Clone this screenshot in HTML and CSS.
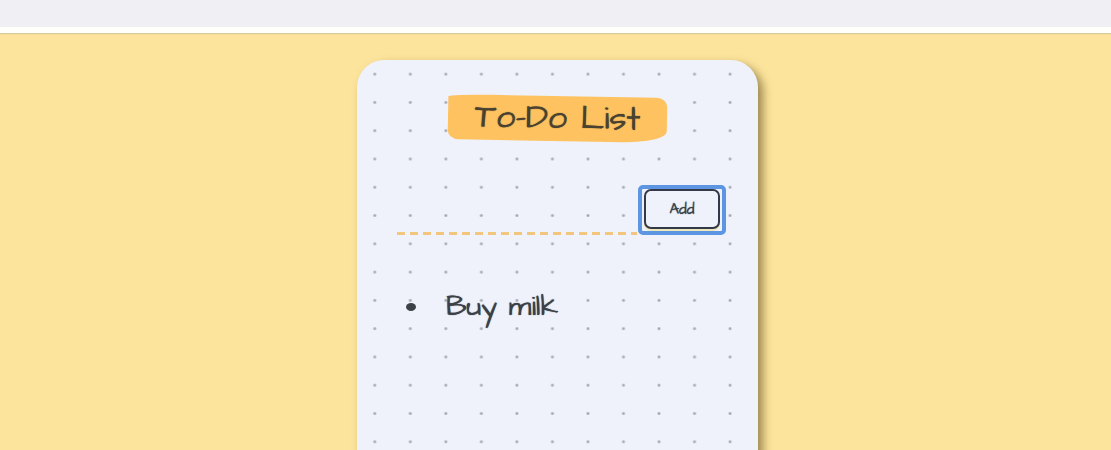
FILE: index.html
```html
<!DOCTYPE html>
<html lang="en">
<head>
<meta charset="utf-8">
<title>To-Do List</title>
<link rel="stylesheet" href="styles.css">
</head>
<body>
<div class="topbar"></div>
<main class="page">
  <section class="card">
    <div class="content">
      <h1 class="title">To-Do List</h1>
      <form class="entry">
        <input class="entry-text" type="text" aria-label="New item">
        <span class="focus-ring"><button class="entry-add" type="button">Add</button></span>
      </form>
      <ul class="items">
        <li class="item">Buy milk</li>
      </ul>
    </div>
  </section>
</main>
</body>
</html>
```

FILE: styles.css
```css
* {
  box-sizing: border-box;
}

body {
  margin: 0;
  height: 100vh;
  overflow: hidden;
  background: #fde49c;
  color: #3c4047;
  font-family: "Architects Daughter", "DejaVu Sans", sans-serif;
}

.topbar {
  height: 33px;
  background: #efeff4;
  border-bottom: 6px solid #fffffb;
  box-shadow: 0 1px 1px #d8c99a;
}

.page {
  display: flex;
  justify-content: center;
  padding: 27px 16px 27px 20px;
}

.card {
  width: 100%;
  max-width: 401px;
  min-height: 481px;
  padding-right: 10px;
  border-radius: 27px 27px 0 0;
  background-color: #eff2fb;
  background-image: radial-gradient(ellipse 2px 2px at center, #a3a7b2 40%, transparent);
  background-origin: content-box;
  background-size: 36px 28px;
  background-repeat: round;
  box-shadow: 5px 5px 10px rgba(90, 75, 30, 0.6);
}

.content {
  padding: 36px 22px 0 40px;
  display: flex;
  flex-direction: column;
}

.title {
  align-self: center;
  margin: 0 0 0 -8px;
  padding: 0 27px;
  border-radius: 20% 5% 20% 5% / 5% 20% 25% 20%;
  background: #fec260;
  color: #4a4230;
  font-size: 34px;
  font-weight: 400;
  line-height: 45px;
  white-space: nowrap;
  text-shadow: 0 0 1px #4a4230;
  transform: rotate(1deg);
}

.entry {
  display: flex;
  align-items: flex-end;
  gap: 1px;
  margin-top: 44px;
}

.entry-text {
  flex: 1;
  min-width: 0;
  height: 46px;
  padding: 0 8px;
  border: 0;
  outline: 0;
  background: repeating-linear-gradient(90deg, #f2c67c 0 8px, transparent 8px 13px) left bottom / 100% 3px no-repeat;
  color: inherit;
  font: inherit;
}

.focus-ring {
  display: flex;
  padding: 0 2px 2px;
  border: 4px solid #5c96e2;
  border-radius: 5px;
}

.entry-add {
  width: 76px;
  height: 40px;
  padding: 0;
  border: 2px solid #343947;
  border-radius: 7px;
  outline: 0;
  background: #eff2fb;
  box-shadow: 0 2px 0 #eee6bd;
  color: inherit;
  font: inherit;
  font-size: 15px;
  text-shadow: 0 0 1px #3c4047;
}

.items {
  margin: 52px 0 0;
  padding: 0;
  list-style: none;
}

.item {
  display: flex;
  align-items: center;
  gap: 30px;
  padding-left: 9px;
  font-size: 29px;
  line-height: 40px;
  text-shadow: 0 0 1px #3c4047;
}

.item::before {
  content: "";
  width: 10px;
  height: 8px;
  border-radius: 50%;
  background: #3c4047;
}
```
